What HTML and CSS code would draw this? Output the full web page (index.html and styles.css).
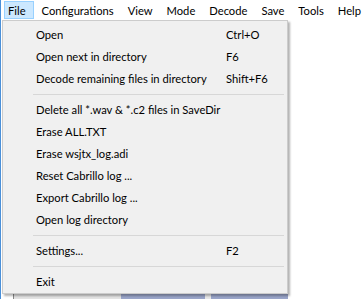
FILE: index.html
```html
<!DOCTYPE html>
<html lang="en">
<head>
    <meta charset="UTF-8">
    <title>File menu</title>
    <link rel="stylesheet" href="styles.css">
</head>
<body>
    <div class="window">
        <div class="menubar">
            <span class="menu-title active">File</span>
            <span class="menu-title">Configurations</span>
            <span class="menu-title">View</span>
            <span class="menu-title">Mode</span>
            <span class="menu-title">Decode</span>
            <span class="menu-title">Save</span>
            <span class="menu-title">Tools</span>
            <span class="menu-title">Help</span>
        </div>
        <div class="content">
            <div class="strip">
                <span class="cell gray"></span>
                <span class="cell blue"></span>
                <span class="cell light"></span>
                <span class="cell blue wide"></span>
            </div>
        </div>
        <div class="dropdown">
            <div class="item"><span>Open</span><span class="key">Ctrl+O</span></div>
            <div class="item"><span>Open next in directory</span><span class="key">F6</span></div>
            <div class="item"><span>Decode remaining files in directory</span><span class="key">Shift+F6</span></div>
            <div class="sep"></div>
            <div class="item"><span>Delete all *.wav &amp; *.c2 files in SaveDir</span></div>
            <div class="item"><span>Erase ALL.TXT</span></div>
            <div class="item"><span>Erase wsjtx_log.adi</span></div>
            <div class="item"><span>Reset Cabrillo log ...</span></div>
            <div class="item"><span>Export Cabrillo log ...</span></div>
            <div class="item"><span>Open log directory</span></div>
            <div class="sep"></div>
            <div class="item"><span>Settings...</span><span class="key">F2</span></div>
            <div class="sep"></div>
            <div class="item"><span>Exit</span></div>
        </div>
    </div>
</body>
</html>
```

FILE: styles.css
```css
body {
    margin: 0;
    background: white;
    font-family: Lato, "Liberation Sans", sans-serif;
    font-size: 11.2px;
    color: #000;
}
.window {
    position: relative;
    width: 364px;
    height: 299px;
    overflow: hidden;
    border-left: 1px solid #4a90d9;
    box-sizing: border-box;
}
.menubar {
    display: flex;
    height: 20px;
    align-items: center;
    padding-left: 3px;
    background: white;
    white-space: nowrap;
}
.menu-title {
    padding: 0 9px 0 3px;
    height: 18px;
    line-height: 17px;
    border: 1px solid transparent;
    box-sizing: border-box;
}
.menu-title.active {
    background: #cce8ff;
    border-color: #99d1ff;
    padding-right: 7px;
    margin-right: 4px;
}
.content {
    padding-top: 274px;
}
.strip {
    display: flex;
    height: 5px;
    margin-left: 12px;
    border-left: 1px solid #888;
}
.cell {
    display: block;
}
.gray {
    width: 107px;
    background: #e3e3e3;
}
.blue {
    width: 84px;
    background: #9aa5c9;
}
.light {
    width: 6px;
    background: #e8e8e8;
}
.wide {
    width: 77px;
}
.dropdown {
    position: absolute;
    top: 20px;
    left: 1px;
    width: 286px;
    height: 274px;
    box-sizing: border-box;
    background: #f0f0f0;
    border: 1px solid #cccccc;
    box-shadow: 2px 2px 2px rgba(0, 0, 0, 0.3);
    padding: 3px 3px 0 2px;
}
.item {
    display: flex;
    height: 22px;
    line-height: 22px;
    padding-left: 31px;
    white-space: nowrap;
}
.item span:first-child {
    width: 190px;
}
.sep {
    height: 1px;
    background: #d7d7d7;
    margin: 4px 0 4px 28px;
}
```
